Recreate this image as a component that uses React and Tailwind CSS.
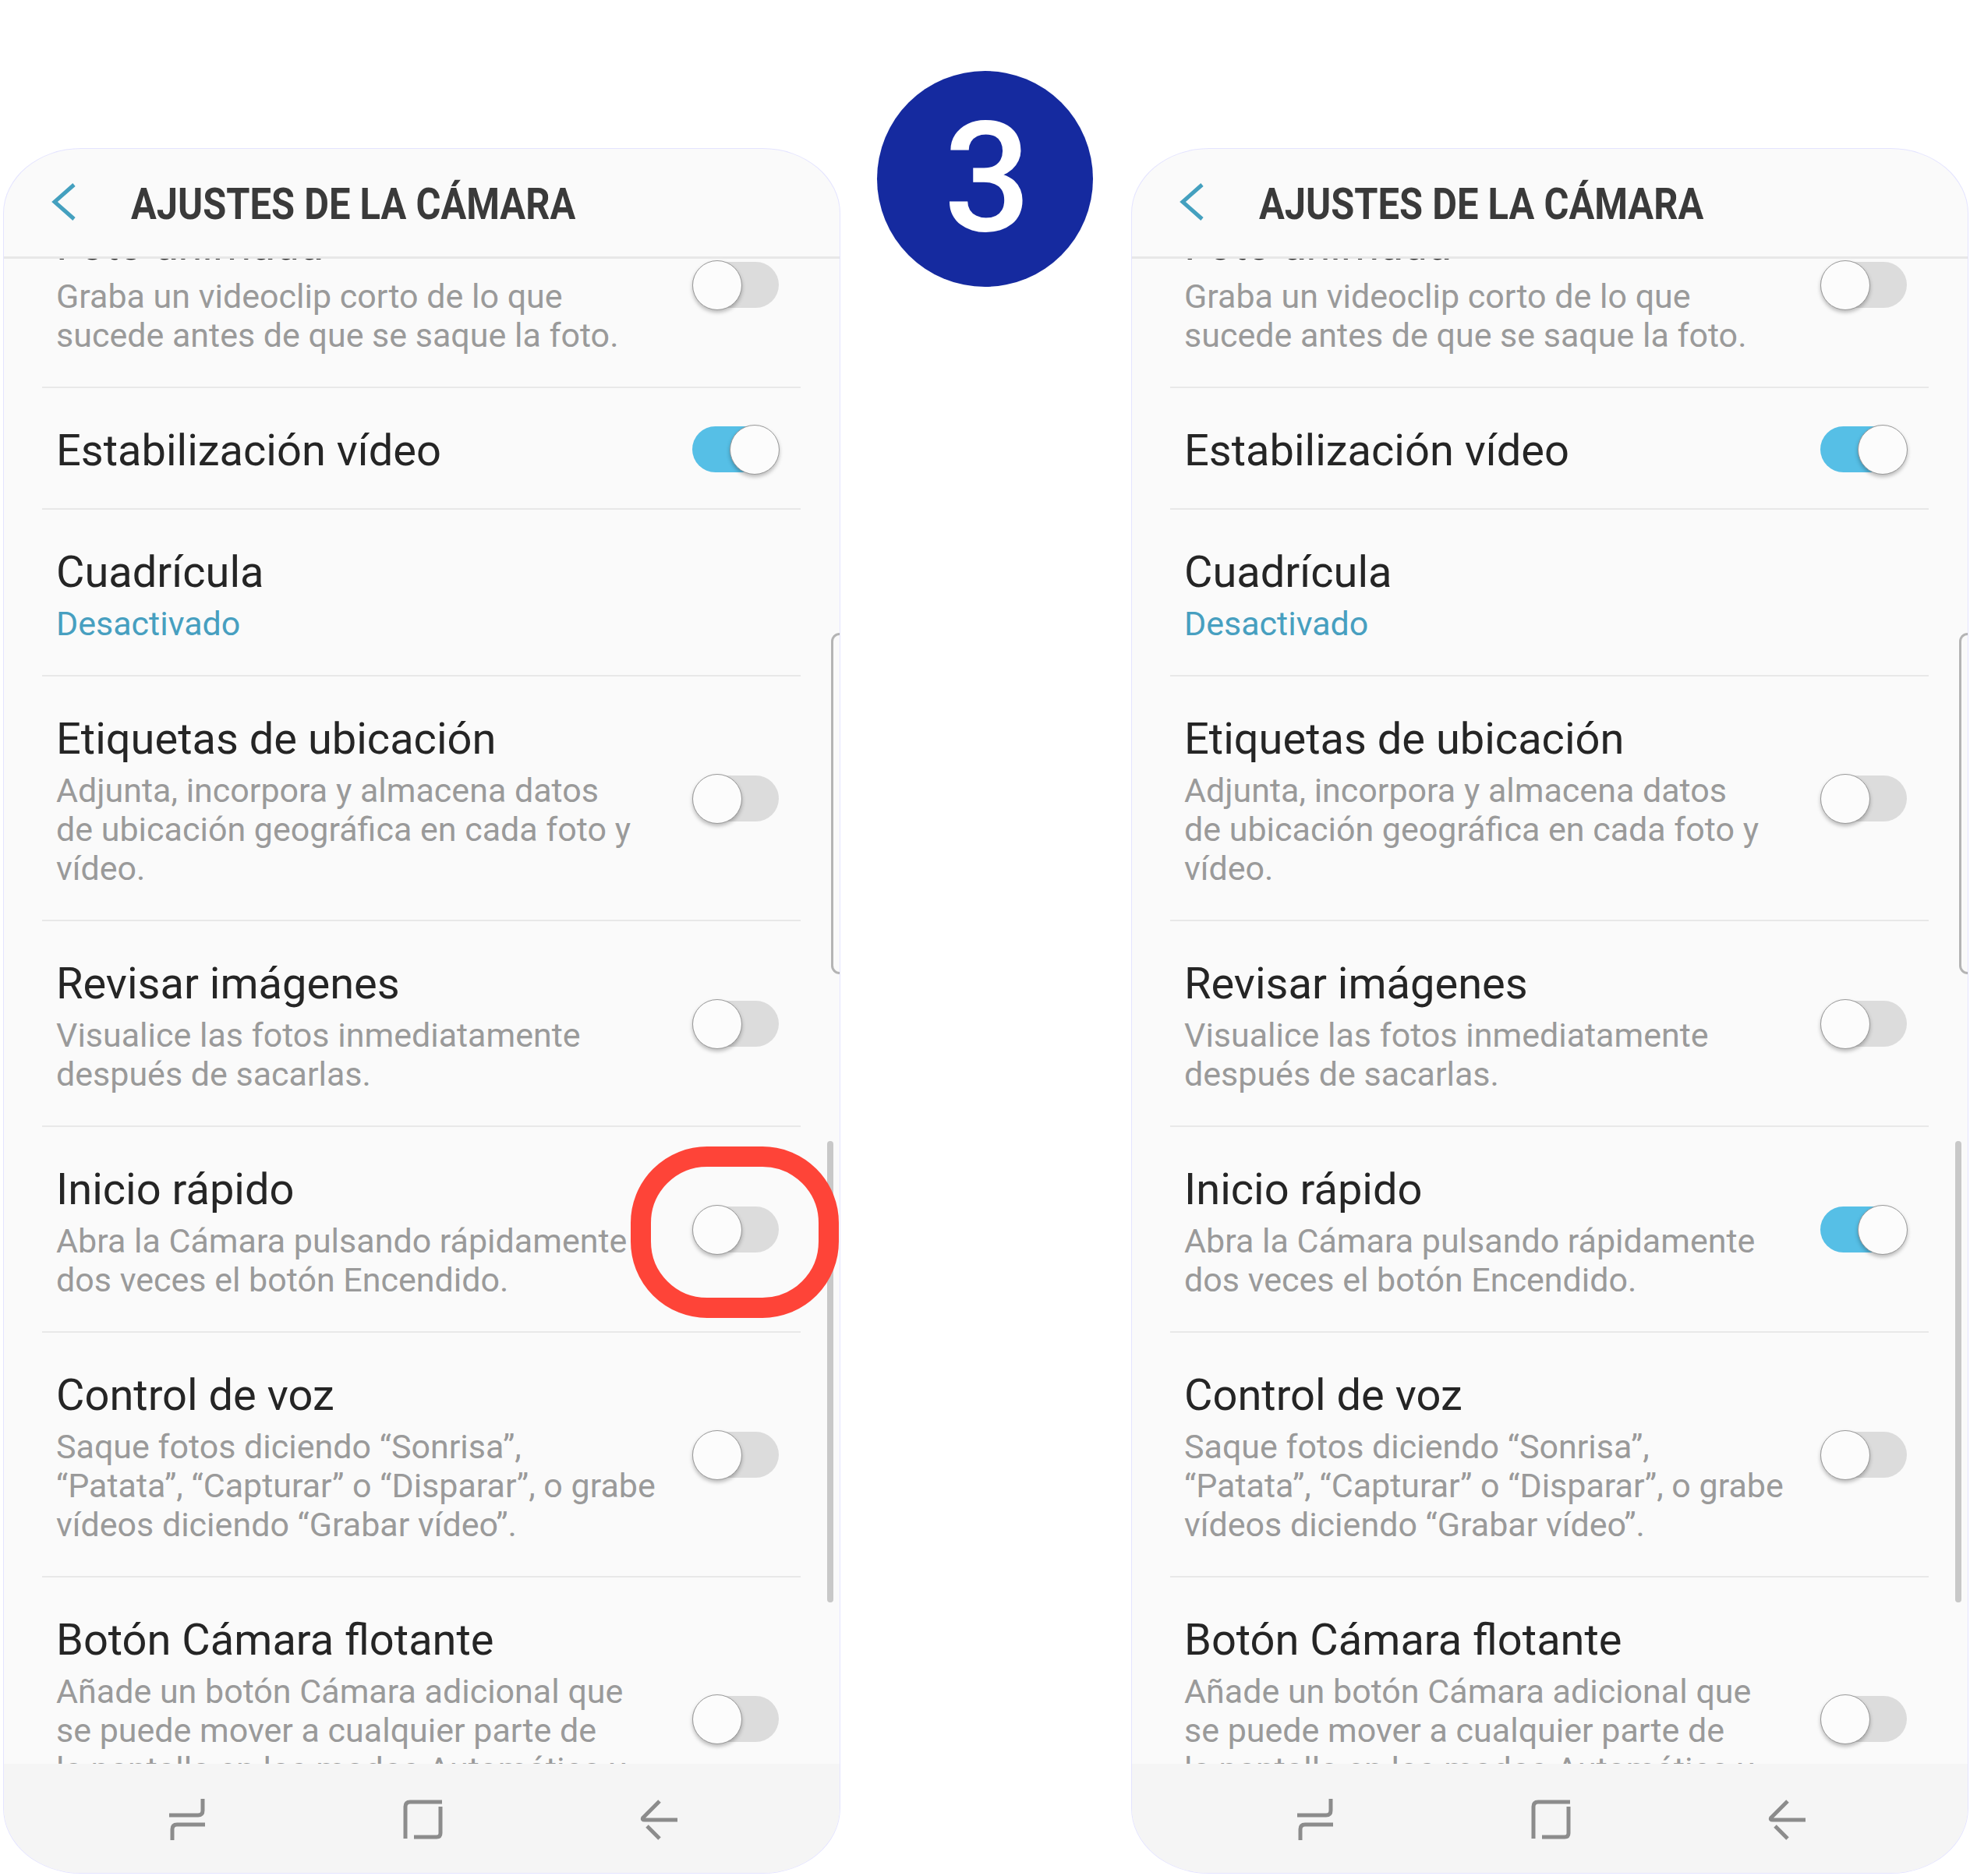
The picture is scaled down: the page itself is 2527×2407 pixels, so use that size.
import React from 'react';

const rows = [
  { title: 'Foto animada', lines: ['Graba un videoclip corto de lo que', 'sucede antes de que se saque la foto.'], toggle: 'off' },
  { title: 'Estabilización vídeo', lines: [], toggle: 'on' },
  { title: 'Cuadrícula', value: 'Desactivado' },
  { title: 'Etiquetas de ubicación', lines: ['Adjunta, incorpora y almacena datos', 'de ubicación geográfica en cada foto y', 'vídeo.'], toggle: 'off' },
  { title: 'Revisar imágenes', lines: ['Visualice las fotos inmediatamente', 'después de sacarlas.'], toggle: 'off' },
  { title: 'Inicio rápido', lines: ['Abra la Cámara pulsando rápidamente', 'dos veces el botón Encendido.'], toggle: 'quick' },
  { title: 'Control de voz', lines: ['Saque fotos diciendo “Sonrisa”,', '“Patata”, “Capturar” o “Disparar”, o grabe', 'vídeos diciendo “Grabar vídeo”.'], toggle: 'off' },
  { title: 'Botón Cámara flotante', lines: ['Añade un botón Cámara adicional que', 'se puede mover a cualquier parte de', 'la pantalla en los modos Automático y'], toggle: 'off', last: true },
];

const Toggle = ({ on }) => (
  <div className={`relative w-[111px] h-[59px] rounded-full shrink-0 ${on ? 'bg-[#56bfe6]' : 'bg-[#dcdcdc]'}`}>
    <div
      className={`absolute top-[-2px] w-[64px] h-[64px] rounded-full bg-[#fcfcfc] border border-[#999999] shadow-[0_3px_5px_rgba(0,0,0,0.25)] ${on ? 'right-[-1px]' : 'left-0'}`}
    />
  </div>
);

const Row = ({ row, quickOn }) => {
  const isOn = row.toggle === 'on' || (row.toggle === 'quick' && quickOn);
  const single = !row.value && row.lines.length === 0;
  return (
    <div
      className={`flex items-center justify-between ml-[49px] mr-[50px] pl-[18px] pr-[28px] border-b-2 border-[#e8e8e8] ${
        single ? 'pt-[37px] pb-[35px]' : 'pt-[40px] pb-[40px]'
      }`}
    >
      <div className={`whitespace-nowrap ${row.last ? 'pb-[50px]' : ''} ${single ? 'translate-y-[2px]' : 'translate-y-[-1px]'}`}>
        <div className="text-[56px] leading-[82px] text-[#252525]">{row.title}</div>
        {row.value && <div className="text-[43px] leading-[50px] text-[#479fc0]">{row.value}</div>}
        {row.lines &&
          row.lines.map((line) => (
            <div key={line} className="text-[43px] leading-[50px] text-[#9a9a9a]">
              {line}
            </div>
          ))}
      </div>
      {row.toggle && <Toggle on={isOn} />}
    </div>
  );
};

const Phone = ({ quickOn, marked }) => (
  <div className="relative flex flex-col shrink-0 w-[1074px] h-[2214px] mt-[99px] rounded-[100px/84px] border border-[#e4e4ff] bg-[#fafafa] overflow-hidden">
    <div className="flex items-start h-[141px] shrink-0 pl-[59px] pt-[41px] border-b-[3px] border-[#e8e8e8]">
      <svg width="36" height="54" viewBox="0 0 36 54" fill="none" stroke="#44a0bf" strokeWidth="5">
        <path d="M31 5 L6 27 L31 49" />
      </svg>
      <span className="inline-block ml-[68px] mt-[-11px] text-[56px] leading-[82px] font-bold text-[#3a3a3a] whitespace-nowrap origin-left scale-x-[0.872]">
        AJUSTES DE LA CÁMARA
      </span>
    </div>

    <div className="flex-1 overflow-hidden">
      <div className="mt-[-98px]">
        {rows.map((row) => (
          <Row key={row.title} row={row} quickOn={quickOn} />
        ))}
      </div>
    </div>

    <div className="flex items-start gap-[251px] h-[140px] shrink-0 pl-[210px] pt-[43px] bg-[#f5f5f5]">
      <svg width="50" height="56" viewBox="0 0 50 56" fill="none" stroke="#8c8c8c" strokeWidth="5">
        <path d="M45 2 V17 Q45 23 39 23 H2" />
        <path d="M48 35 H12 Q6 35 6 41 V55" />
      </svg>
      <svg className="mt-[2px]" width="54" height="54" viewBox="0 0 54 54" fill="none" stroke="#8c8c8c" strokeWidth="5">
        <path d="M4 51 V10 Q4 4 10 4 H51" />
        <path d="M49 10 V44 Q49 49 44 49 H15" />
      </svg>
      <svg width="50" height="56" viewBox="0 0 50 56" fill="none" stroke="#8c8c8c" strokeWidth="5">
        <path d="M25 5 L4 26 Q2 29 6 29 H48" />
        <path d="M9 37 L25 53" />
      </svg>
    </div>

    {/* edge panel handle and scroll thumb */}
    <div className="absolute right-0 top-[621px] w-[11px] h-[438px] border-l-[3px] border-y-[3px] border-[#b4b4b4] rounded-l-[12px]" />
    <div className="absolute left-[1056px] top-[1273px] w-[8px] h-[592px] rounded-full bg-[#c8c8c8]" />

    {marked && (
      <div className="absolute left-[804px] top-[1280px] w-[267px] h-[220px] rounded-[98px] border-[26px] border-[#fe4438]" />
    )}
  </div>
);

const App = () => {
  return (
    <div className="flex items-start w-[2527px] h-[2407px] pl-[4px] pt-[91px] bg-white font-['Roboto',sans-serif] overflow-hidden">
      <Phone marked />
      <div className="flex items-center justify-center shrink-0 w-[277px] h-[277px] ml-[47px] mr-[49px] pb-[2px] pl-[6px] rounded-full bg-[#152a9f] text-white text-[197px] leading-none font-medium">
        3
      </div>
      <Phone quickOn />
    </div>
  );
};

export default App;
